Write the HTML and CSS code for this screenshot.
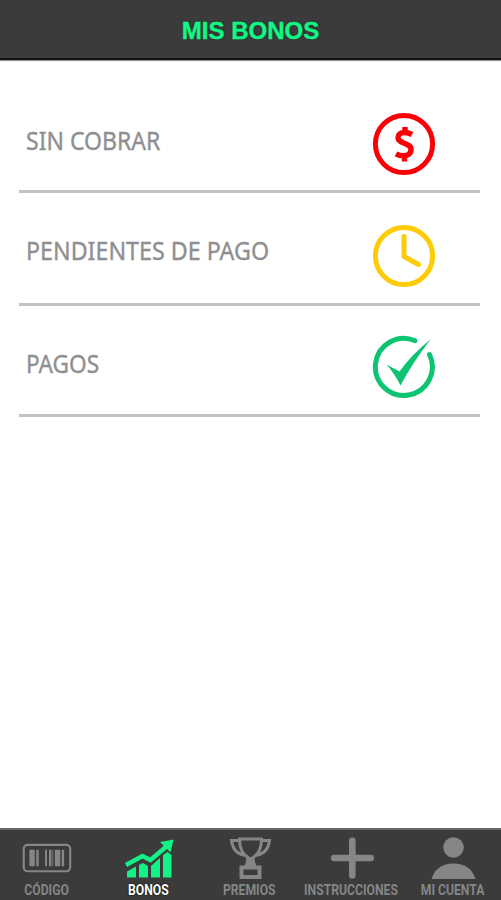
FILE: index.html
```html
<!DOCTYPE html>
<html lang="es">
<head>
<meta charset="utf-8">
<meta name="viewport" content="width=device-width, initial-scale=1">
<title>Mis bonos</title>
<link rel="stylesheet" href="styles.css">
</head>
<body>
<header class="header"><h1>MIS BONOS</h1></header>
<main class="list">
  <a class="row row-due">
    <span class="row-label">SIN COBRAR</span>
    <svg class="row-icon" viewBox="0 0 64 64"><circle cx="32" cy="32" r="28.6" fill="none" stroke="#fb0007" stroke-width="5"/><path d="M40 22.500Q36.500 20.500 32.500 20.500C28 20.500 26 22.800 26 25.500C26 32 39 30.500 39 37.500C39 41.500 36 43.800 31.500 43.800Q27.500 43.800 24 41.800M33 15V21M32.500 43V49.500" fill="none" stroke="#fb0007" stroke-width="5.500"/></svg>
  </a>
  <a class="row row-pending">
    <span class="row-label">PENDIENTES DE PAGO</span>
    <svg class="row-icon" viewBox="0 0 64 64"><circle cx="32" cy="32" r="28.600" fill="none" stroke="#fecb05" stroke-width="5"/><path d="M32 12.500V32.500L46.500 40.500" fill="none" stroke="#fecb05" stroke-width="5" stroke-linecap="round" stroke-linejoin="round"/></svg>
  </a>
  <a class="row row-paid">
    <span class="row-label">PAGOS</span>
    <svg class="row-icon" viewBox="0 0 64 64"><path d="M43 5.700A28.500 28.500 0 1 0 57.500 19.500" fill="none" stroke="#0dc473" stroke-width="5" stroke-linecap="round"/><path d="M14.500 29.500L27.500 36.500Q40 19 58.500 4.500Q41 27 28.500 50.500Q22.500 38.500 14.500 29.500Z" fill="#0dc473"/></svg>
  </a>
</main>
<nav class="tabs">
  <a class="tab tab-code">
    <svg class="tab-icon" viewBox="0 0 50 46"><rect x="1.200" y="7" width="47.500" height="27" rx="4" fill="none" stroke="#858688" stroke-width="2.200"/><path d="M7 12h5.500v17h-5.500zM14 12h2.500v17h-2.500zM23 12h2v17h-2zM27 12h2.500v17h-2.500zM33 12h5.500v17h-5.500zM40 12h2.500v17h-2.500zM30.500 12h.8v17h-.8z" fill="#858688"/></svg>
    <span class="tab-label">CÓDIGO</span>
  </a>
  <a class="tab tab-bonus active">
    <svg class="tab-icon" viewBox="0 0 50 46"><path d="M3 40.500v-6l9-5v11zM15 40.500V28l4-2 5 3v11.500zM27 40.500V29l9-8v19.500zM39 40.500V18l4.500-3 4 3v22.500z" fill="#12f286"/><path d="M2 28L18.500 19L26.500 23L43 9" fill="none" stroke="#12f286" stroke-width="4.500"/><path d="M36 5L49.500 2.500L46.500 15.500Z" fill="#12f286"/></svg>
    <span class="tab-label">BONOS</span>
  </a>
  <a class="tab tab-prizes">
    <svg class="tab-icon" viewBox="0 0 50 46"><path d="M14.500 2H36.500Q36.500 15.500 28 20.500Q28 26.500 30.500 30H20.500Q22.500 26.500 23 20.500Q14.500 15.500 14.500 2ZM14.500 3.500H6.500Q8 16.500 20.500 18.500M36.500 3.500H44.500Q43 16.500 30.500 18.500" fill="none" stroke="#858688" stroke-width="3"/><path d="M22 20h7l1 10h-9z" fill="#858688"/><path d="M16.500 30.500H34.500V40H16.500Z" fill="none" stroke="#858688" stroke-width="4"/></svg>
    <span class="tab-label">PREMIOS</span>
  </a>
  <a class="tab tab-help">
    <svg class="tab-icon" viewBox="0 0 50 46"><path d="M26.300 3.700V38.500M8.200 21H44.700" fill="none" stroke="#858688" stroke-width="6.600" stroke-linecap="round"/></svg>
    <span class="tab-label">INSTRUCCIONES</span>
  </a>
  <a class="tab tab-account">
    <svg class="tab-icon" viewBox="0 0 50 46"><circle cx="25.500" cy="10.500" r="10.300" fill="#858688"/><path d="M3.500 42Q8.500 26.500 25.500 26.500T47.500 42Z" fill="#858688"/></svg>
    <span class="tab-label">MI CUENTA</span>
  </a>
</nav>
</body>
</html>
```
FILE: styles.css
```css
* { box-sizing: border-box; }

body {
  margin: 0;
  height: 900px;
  display: flex;
  flex-direction: column;
  background: #fff;
  overflow: hidden;
}

.header {
  height: 60px;
  flex: none;
  padding-top: 17px;
  background: #3a3b3a;
  border-bottom: 2px solid #101110;
  box-shadow: 0 1px 1px #999;
  text-align: center;
}

.header h1 {
  margin: 0;
  font: bold 24px/27px "Liberation Sans", Arial, sans-serif;
  color: #0ffa82;
  -webkit-text-stroke: .4px #0ffa82;
  text-shadow: 0 0 2px #241638;
}

.list {
  flex: 1;
  padding: 0 21px 0 19px;
}

.row {
  display: flex;
  justify-content: space-between;
  align-items: flex-start;
  height: 113px;
  padding: 31px 44px 0 7px;
  border-bottom: 3px solid #c2c2c2;
}

.row-due { height: 133px; padding-top: 52px; }
.row-paid { height: 111px; padding-top: 29px; }

.row-label {
  margin-top: 9px;
  font: 26px/36px "Noto Sans", sans-serif;
  color: #8f8f92;
  -webkit-text-stroke: .4px #8f8f92;
  white-space: nowrap;
  transform: scaleX(.885);
  transform-origin: left;
}

.row-due .row-label { margin-top: 10px; }
.row-pending .row-label { margin-top: 8px; transform: scaleX(.894); }
.row-paid .row-label { margin-top: 10px; transform: scaleX(.87); }

.row-icon {
  width: 64px;
  height: 64px;
  flex: none;
}

.tabs {
  display: grid;
  grid-template-columns: 95px 105px 99px 103px 99px;
  height: 72px;
  background: #3a3b3a;
  border-top: 2px solid #696a69;
}

.tab {
  display: flex;
  flex-direction: column;
  align-items: center;
  padding-top: 7px;
  color: #858688;
}

.tab-icon {
  width: 50px;
  height: 46px;
  flex: none;
}

.tab-label {
  margin-top: -1px;
  font: bold 14px/16px Roboto, sans-serif;
  white-space: nowrap;
  transform: scaleX(.87);
}

.tab-code { padding-right: 1px; }
.tab-code .tab-icon { padding-top: 1px; }
.tab-bonus { padding-left: 1px; }
.tab-bonus .tab-icon { margin-left: 1px; }
.tab-account { padding-left: 2px; }
.active { color: #fff; }
.active .tab-label { text-shadow: 0 0 2px #000; }
```
